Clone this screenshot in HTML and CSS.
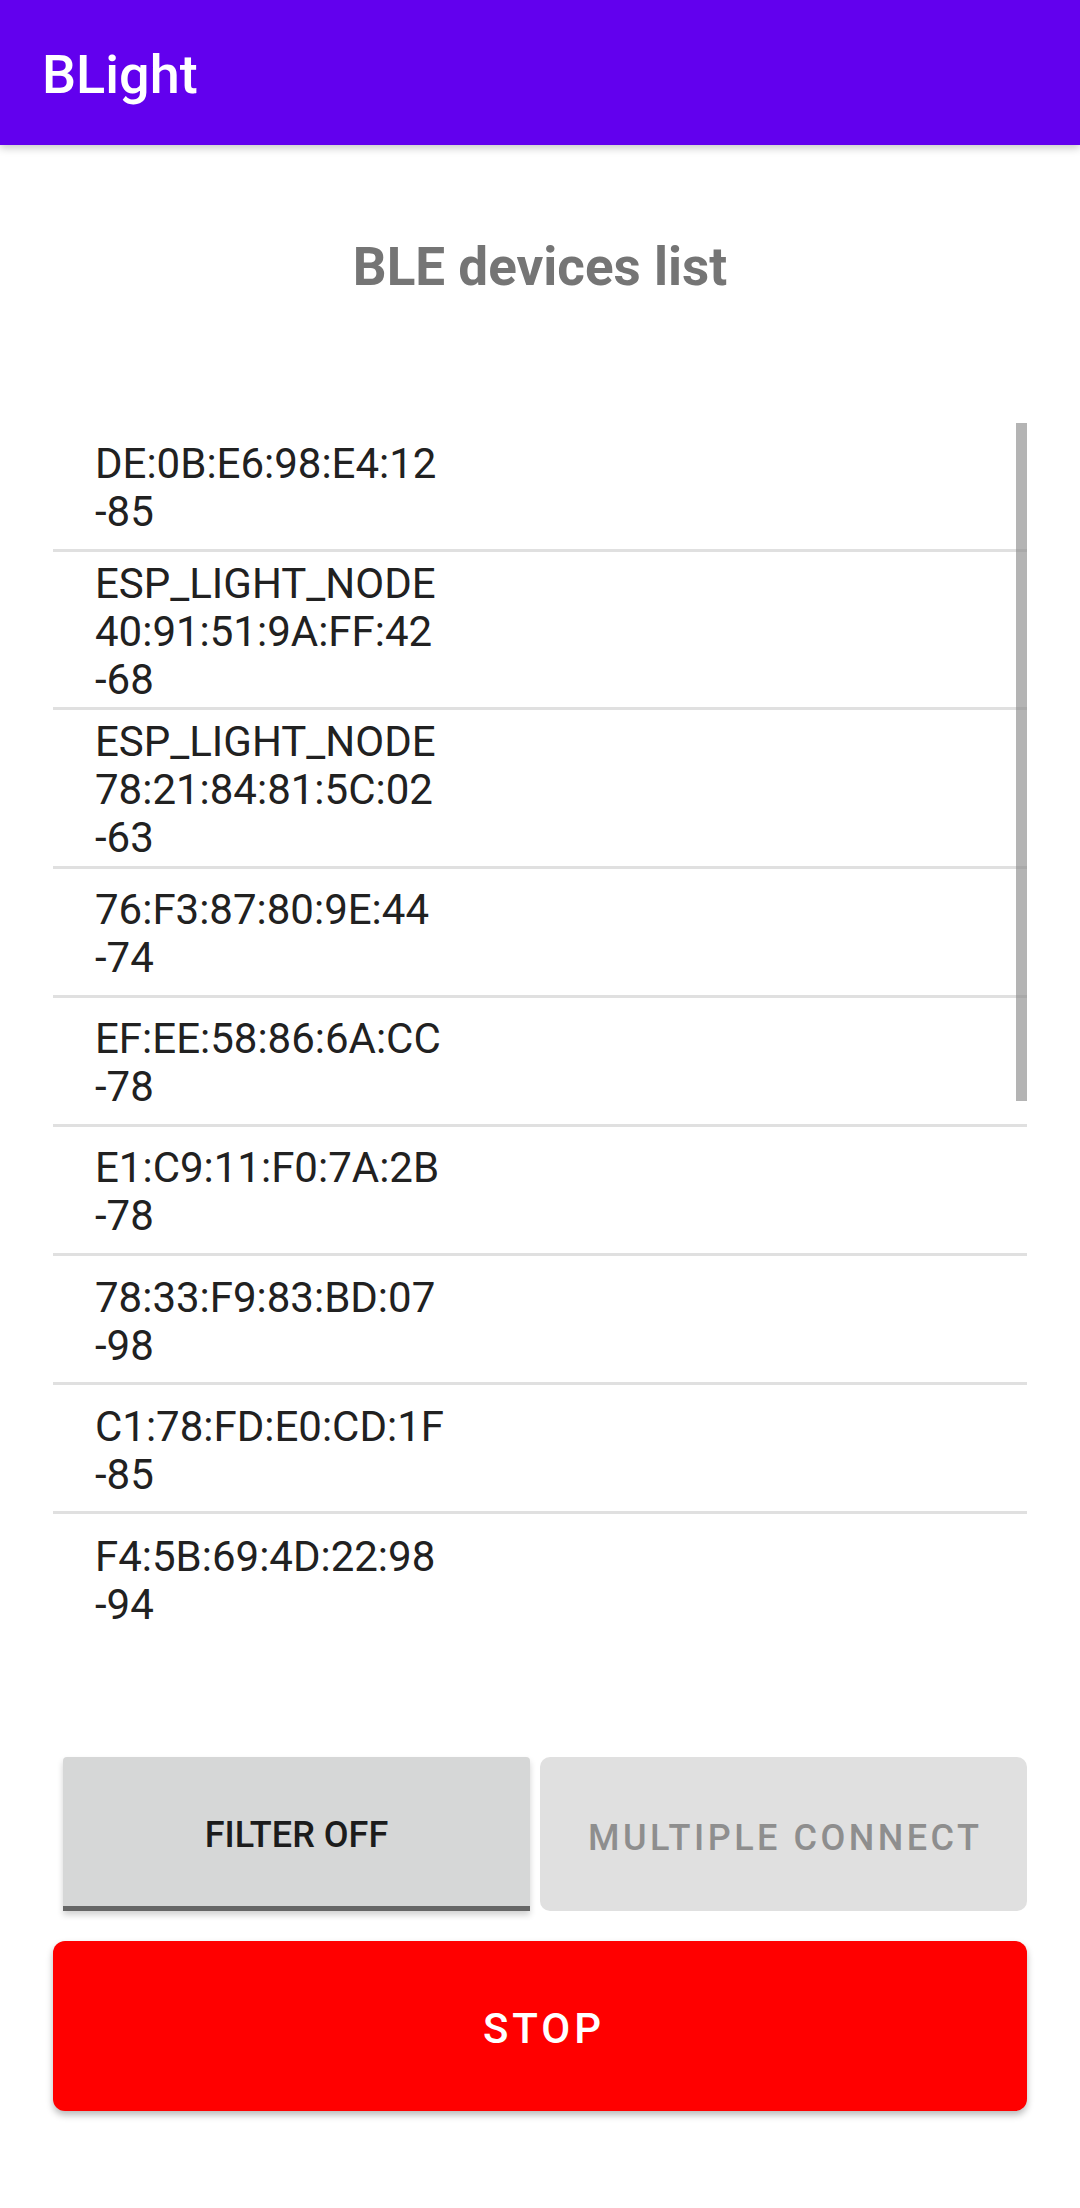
FILE: index.html
```html
<!DOCTYPE html>
<html lang="en">
<head>
<meta charset="utf-8">
<title>BLight</title>
<link rel="stylesheet" href="styles.css">
</head>
<body>
<header class="appbar"><span class="appbar-title">BLight</span></header>
<main class="content">
  <h1 class="list-title">BLE devices list</h1>
  <div class="device-list">
    <ul class="devices">
      <li class="device"><span>DE:0B:E6:98:E4:12</span><span>-85</span></li>
      <li class="device"><span>ESP_LIGHT_NODE</span><span>40:91:51:9A:FF:42</span><span>-68</span></li>
      <li class="device"><span>ESP_LIGHT_NODE</span><span>78:21:84:81:5C:02</span><span>-63</span></li>
      <li class="device"><span>76:F3:87:80:9E:44</span><span>-74</span></li>
      <li class="device"><span>EF:EE:58:86:6A:CC</span><span>-78</span></li>
      <li class="device"><span>E1:C9:11:F0:7A:2B</span><span>-78</span></li>
      <li class="device"><span>78:33:F9:83:BD:07</span><span>-98</span></li>
      <li class="device"><span>C1:78:FD:E0:CD:1F</span><span>-85</span></li>
      <li class="device"><span>F4:5B:69:4D:22:98</span><span>-94</span></li>
    </ul>
    <div class="scroll-thumb"></div>
  </div>
  <div class="button-row">
    <button class="btn btn-filter">FILTER OFF</button>
    <button class="btn btn-multi" disabled>MULTIPLE CONNECT</button>
  </div>
  <button class="btn btn-stop">STOP</button>
</main>
</body>
</html>
```
FILE: styles.css
```css
html, body {
  margin: 0;
  padding: 0;
  background: #ffffff;
}
body {
  width: 1080px;
  height: 2208px;
  overflow: hidden;
  font-family: Roboto, "Noto Sans", sans-serif;
}
.appbar {
  height: 145px;
  background: #6200ee;
  display: flex;
  align-items: center;
  padding: 4px 0 0 42px;
  box-sizing: border-box;
  box-shadow: 0 3px 8px rgba(0, 0, 0, 0.22);
  position: relative;
  z-index: 2;
}
.appbar-title {
  color: #ffffff;
  font-size: 54px;
  font-weight: 500;
  line-height: 54px;
}
.content {
  display: flex;
  flex-direction: column;
}
.list-title {
  margin: 90px 0 0;
  text-align: center;
  font-size: 53px;
  line-height: 64px;
  font-weight: 700;
  color: #757575;
}
.device-list {
  margin: 124px 53px 0;
  height: 1218px;
  overflow: hidden;
  position: relative;
}
.devices {
  list-style: none;
  margin: 0;
  padding: 0;
}
.device {
  min-height: 129.1px;
  box-sizing: border-box;
  padding: 8px 0 3.4px 42px;
  display: flex;
  flex-direction: column;
  justify-content: center;
  font-size: 42px;
  line-height: 48px;
  color: #212121;
  border-bottom: 3px solid #e0e0e0;
}
.device:last-child {
  border-bottom: none;
}
.scroll-thumb {
  position: absolute;
  top: 0;
  right: 0;
  width: 11px;
  height: 678px;
  background: rgba(140, 140, 140, 0.65);
}
.button-row {
  margin-top: 116px;
  padding: 0 53px 0 63px;
  display: grid;
  grid-template-columns: 467px 1fr;
  column-gap: 10px;
}
.btn {
  font-family: Roboto, "Noto Sans", sans-serif;
  font-weight: 500;
  border: none;
  margin: 0;
  padding: 0;
  display: flex;
  align-items: center;
  justify-content: center;
}
.btn-filter {
  height: 154px;
  background: #d6d7d7;
  border-bottom: 5px solid #666666;
  border-radius: 4px 4px 0 0;
  font-size: 36px;
  color: #1c1c1c;
  padding-top: 7px;
  box-shadow: 0 4px 6px rgba(0, 0, 0, 0.18);
}
.btn-multi {
  height: 154px;
  background: #e0e0e0;
  border-radius: 10px;
  font-size: 36px;
  letter-spacing: 3.5px;
  color: #8e8e8e;
  padding: 7px 0 0 3.5px;
}
.btn-stop {
  margin: 30px 53px 0;
  height: 170px;
  background: #ff0000;
  border-radius: 12px;
  color: #ffffff;
  font-size: 42px;
  letter-spacing: 4px;
  padding: 4px 0 0 8px;
  box-shadow: 0 4px 7px rgba(0, 0, 0, 0.28);
}
```
